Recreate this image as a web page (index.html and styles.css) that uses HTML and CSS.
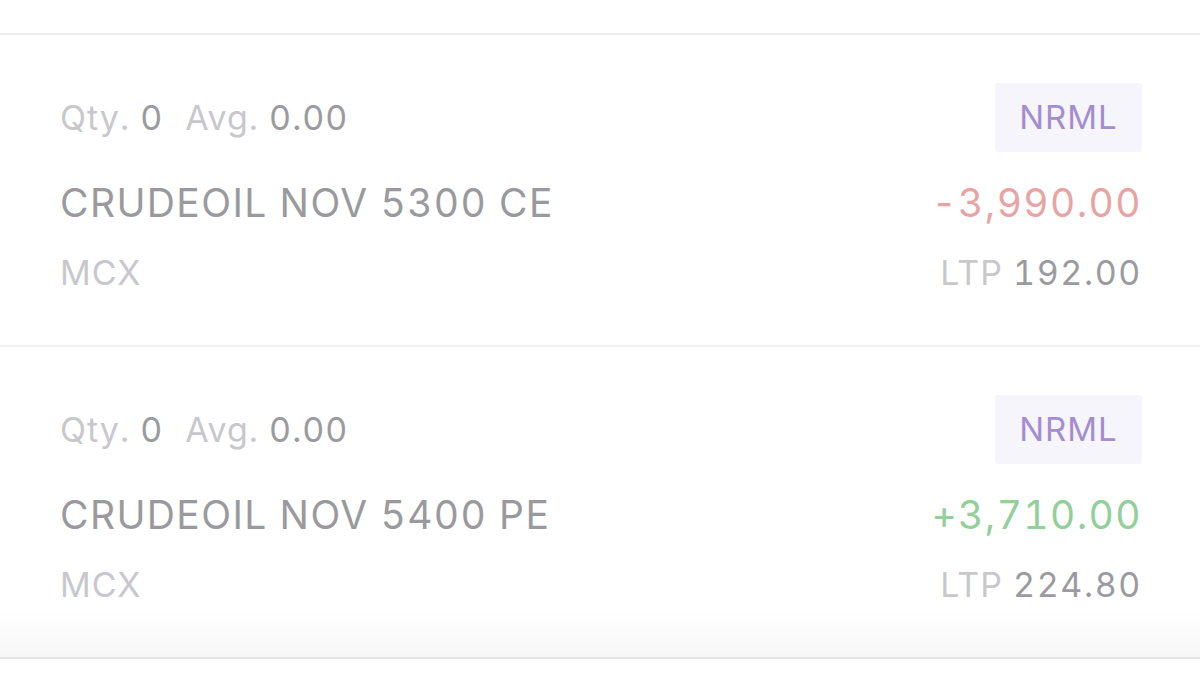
FILE: index.html
```html
<!DOCTYPE html>
<html lang="en">

<head>
    <meta charset="UTF-8" />
    <meta name="viewport" content="width=device-width, initial-scale=1.0" />
    <title>Positions</title>
    <link rel="stylesheet" href="styles.css">
</head>

<body>
    <div class="positions">
        <!-- Position 1 -->
        <div class="position">
            <div class="line">
                <div class="qty">
                    <span class="label">Qty.</span> <span class="value">0</span>
                    <span class="label gap">Avg.</span> <span class="value">0.00</span>
                </div>
                <span class="badge">NRML</span>
            </div>
            <div class="line">
                <span class="symbol">CRUDEOIL NOV 5300 CE</span>
                <span class="pnl loss">-3,990.00</span>
            </div>
            <div class="line">
                <span class="label">MCX</span>
                <span><span class="label">LTP</span> <span class="value">192.00</span></span>
            </div>
        </div>

        <!-- Position 2 -->
        <div class="position last">
            <div class="line">
                <div class="qty">
                    <span class="label">Qty.</span> <span class="value">0</span>
                    <span class="label gap">Avg.</span> <span class="value">0.00</span>
                </div>
                <span class="badge">NRML</span>
            </div>
            <div class="line">
                <span class="symbol">CRUDEOIL NOV 5400 PE</span>
                <span class="pnl profit">+3,710.00</span>
            </div>
            <div class="line">
                <span class="label">MCX</span>
                <span><span class="label">LTP</span> <span class="value">224.80</span></span>
            </div>
        </div>
    </div>
</body>

</html>
```

FILE: styles.css
```css
body {
    font-family: Inter, "Noto Sans", sans-serif;
    margin: 0;
    background: #fff;
    color: #9a9a9e;
}

.positions {
    margin-top: 33px;
    border-top: 2px solid #ececec;
}

.position {
    box-sizing: border-box;
    height: 312px;
    padding: 48px 58px 0 60px;
    display: grid;
    grid-template-rows: 69px 100px 42px;
    border-bottom: 2px solid #f0f0f0;
}

.position.last {
    border-bottom: 2px solid #e4e4e4;
    background: linear-gradient(to bottom, #fff 85%, #f7f7f7 100%);
}

.line {
    display: flex;
    justify-content: space-between;
    align-items: center;
    font-size: 34px;
    line-height: 1;
    letter-spacing: 1px;
    font-variant-numeric: tabular-nums;
}

.label {
    color: #c8c8cc;
}

.value {
    color: #9b9b9f;
    letter-spacing: 1.6px;
}

.qty .value {
    letter-spacing: 1px;
}

.gap {
    margin-left: 12px;
}

.badge {
    width: 147px;
    height: 69px;
    display: flex;
    align-items: center;
    justify-content: center;
    background: #f7f5fc;
    border-radius: 3px;
    color: #a38dd0;
    font-size: 33px;
}

.symbol {
    font-size: 39px;
    letter-spacing: 1.4px;
    color: #9a9a9e;
}

.pnl {
    font-size: 39px;
    letter-spacing: 1.4px;
}

.loss {
    color: #e8a4a4;
}

.profit {
    color: #92cf99;
}
```
